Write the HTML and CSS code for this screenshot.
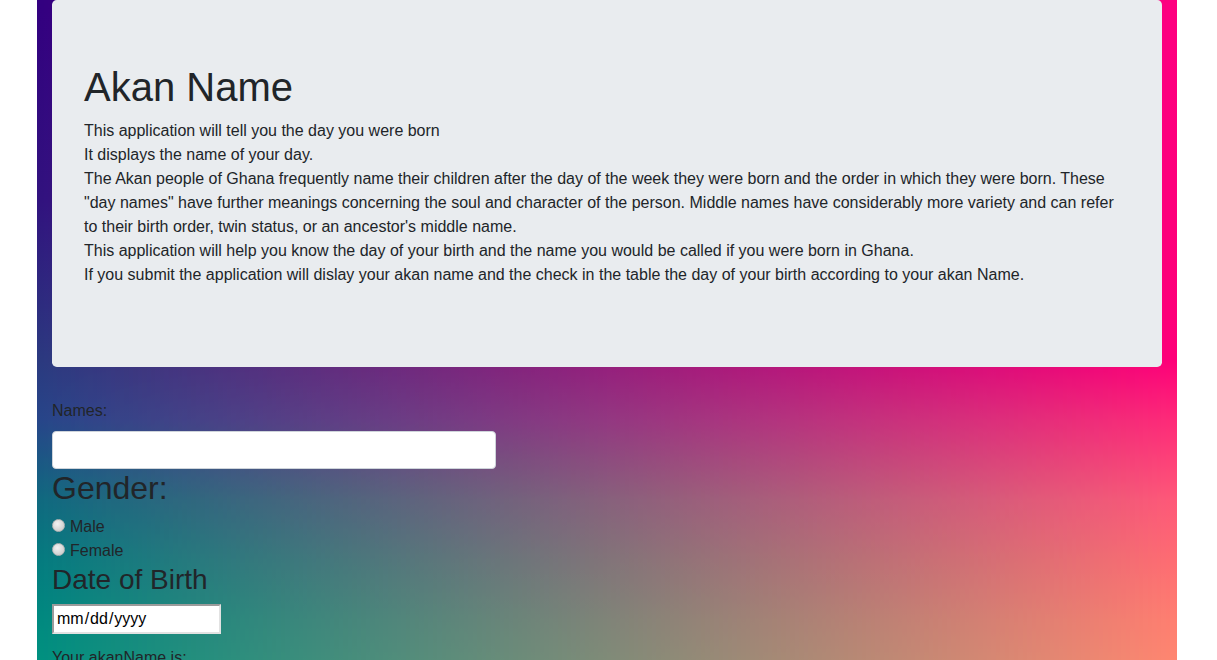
FILE: index.html
```html
<!DOCTYPE html>
<html lang="en">
<head>
<meta charset="utf-8">
<title>Akan Name</title>
<link rel="stylesheet" href="styles.css">
</head>
<body>
<div class="container">
  <div class="jumbotron">
    <h1 class="title">Akan Name</h1>
    <p class="intro">This application will tell you the day you were born<br>It displays the name of your day.<br>The Akan people of Ghana frequently name their children after the day of the week they were born and the order in which they were born. These "day names" have further meanings concerning the soul and character of the person. Middle names have considerably more variety and can refer to their birth order, twin status, or an ancestor's middle name.<br>This application will help you know the day of your birth and the name you would be called if you were born in Ghana.<br>If you submit the application will dislay your akan name and the check in the table the day of your birth according to your akan Name.</p>
  </div>
  <form class="akan-form">
    <label class="field-label" for="names">Names:</label>
    <input class="text-input" id="names" type="text">
    <h2 class="section-title">Gender:</h2>
    <label class="radio-row"><input class="radio" type="radio" name="gender" value="male">Male</label>
    <label class="radio-row"><input class="radio" type="radio" name="gender" value="female">Female</label>
    <h3 class="sub-title">Date of Birth</h3>
    <input class="date-input" type="date">
  </form>
  <p class="result">Your akanName is:</p>
</div>
</body>
</html>
```
FILE: styles.css
```css
html, body {
  margin: 0;
  padding: 0;
  background: #fff;
}

body {
  padding-right: 3px;
  font-family: "Liberation Sans", Arial, sans-serif;
  font-size: 16px;
  line-height: 1.5;
  color: #212529;
}

.container {
  width: 1140px;
  margin: 0 auto;
  padding: 0 15px;
  box-sizing: border-box;
  min-height: 900px;
  position: relative;
  isolation: isolate;
  background: linear-gradient(to bottom,
    #330080 0px,
    #31137f 200px,
    #2b3a80 360px,
    #27468a 420px,
    #106a80 500px,
    #057c80 560px,
    #008a80 620px,
    #009480 680px);
}

.container::before {
  content: "";
  position: absolute;
  inset: 0;
  z-index: -1;
  background: linear-gradient(to bottom,
    #ff0080 0px,
    #ff0078 360px,
    #ff2a78 420px,
    #ff5878 500px,
    #ff6c72 560px,
    #ff7e70 620px,
    #ff8a70 680px);
  -webkit-mask-image: linear-gradient(to right, transparent, #000);
  mask-image: linear-gradient(to right, transparent, #000);
}

.jumbotron {
  background: #e9ecef;
  border-radius: 4.8px;
  padding: 63px 32px 64px;
  margin-bottom: 32px;
}

.title {
  margin: 0 0 8px;
  font-size: 40px;
  font-weight: 400;
  line-height: 1.2;
}

.intro {
  margin: 0 0 16px;
}

.akan-form {
  display: flex;
  flex-direction: column;
  align-items: flex-start;
}

.field-label {
  display: block;
  margin-bottom: 8px;
}

.text-input {
  box-sizing: border-box;
  width: 444px;
  height: 38px;
  margin: 0;
  padding: 6px 12px;
  font: inherit;
  background: #fff;
  border: 1px solid #ced4da;
  border-radius: 4px;
}

.section-title {
  margin: 0 0 8px;
  font-size: 32px;
  font-weight: 400;
  line-height: 1.2;
}

.radio-row {
  display: flex;
  align-items: center;
  height: 24px;
}

.radio {
  -webkit-appearance: none;
  appearance: none;
  box-sizing: border-box;
  width: 13px;
  height: 13px;
  margin: -3px 5px 0 0;
  border-radius: 50%;
  border: 1px solid #b5b5b5;
  background: radial-gradient(circle at 40% 35%, #f2f2f2 0%, #d8d8d8 55%, #c4c4c4 100%);
}

.sub-title {
  margin: 0 0 7px;
  font-size: 28px;
  font-weight: 400;
  line-height: 1.2;
}

.date-input {
  box-sizing: border-box;
  width: 169px;
  height: 30px;
  margin: 0;
  padding: 1px 2px;
  font: inherit;
  color: #000;
  background: #fff;
  border: 2px solid;
  border-color: #9b9b9b #e2e2e2 #e2e2e2 #9b9b9b;
}

.date-input::-webkit-calendar-picker-indicator {
  display: none;
}

.date-input::-webkit-datetime-edit {
  padding: 0;
}

.result {
  margin: 12px 0 0;
}
```
